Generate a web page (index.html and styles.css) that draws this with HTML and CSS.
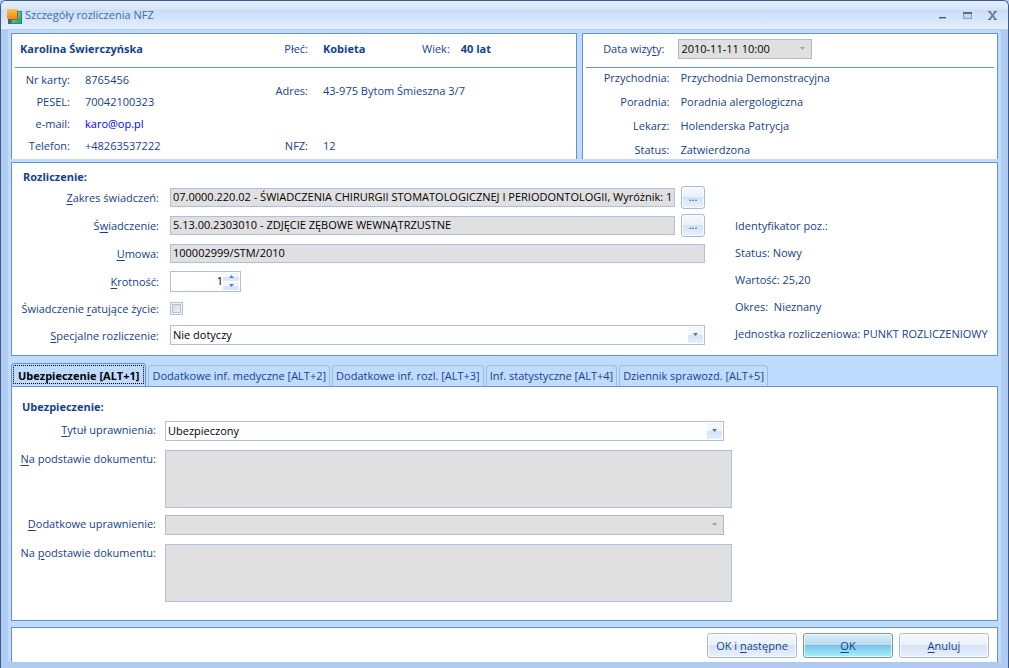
FILE: index.html
```html
<!DOCTYPE html>
<html lang="pl">
<head>
<meta charset="utf-8">
<title>Szczegóły rozliczenia NFZ</title>
<link rel="stylesheet" href="styles.css">
</head>
<body>
<div class="window">
  <header class="titlebar">
    <svg class="app-icon" width="16" height="18" viewBox="0 0 16 18" aria-hidden="true">
      <defs>
        <linearGradient id="og" x1="0" y1="0" x2="0" y2="1"><stop offset="0" stop-color="#ffc14a"/><stop offset="1" stop-color="#ee8a10"/></linearGradient>
        <linearGradient id="gg" x1="0" y1="0" x2="1" y2="1"><stop offset="0" stop-color="#9fd6b4"/><stop offset="1" stop-color="#1d9a68"/></linearGradient>
      </defs>
      <rect x="1" y="13" width="5" height="5" fill="#4a5f8c"/>
      <rect x="4.500" y="5.500" width="10" height="12" fill="url(#gg)" stroke="#2f8a66"/>
      <path d="M2 13.500h8.500v-9" fill="none" stroke="#8b6a35"/>
      <rect x="0" y="3" width="10" height="10" rx="1" fill="url(#og)"/>
    </svg>
    <h1 class="window-title">Szczegóły rozliczenia NFZ</h1>
    <div class="window-buttons">
      <button type="button" class="win-btn" aria-label="Minimalizuj"><svg width="9" height="9" viewBox="0 0 9 9"><path d="M1 6h7v1H1z" fill="#4d5a70"/><path d="M1 7h7v1H1z" fill="#9fb0c8"/></svg></button>
      <button type="button" class="win-btn" aria-label="Maksymalizuj"><svg width="9" height="9" viewBox="0 0 9 9"><rect x="0.500" y="1.500" width="8" height="6" fill="#c3d5ee" stroke="#8ba0c0"/><path d="M0 1h9v2H0z" fill="#5c6b86"/></svg></button>
      <button type="button" class="win-btn" aria-label="Zamknij"><svg width="9" height="9" viewBox="0 0 9 9"><path d="M1.500 .5l6 8M7.500 .5l-6 8" stroke="#76859d" stroke-width="2"/><path d="M0 .5h3M6 .5h3M0 8.500h3M6 8.500h3" stroke="#5f6b80"/></svg></button>
    </div>
  </header>
  <main class="content">
    <div class="info">
      <section class="panel open-bottom">
        <div class="info-head person-grid">
          <strong class="name">Karolina Świerczyńska</strong>
          <span class="label">Płeć:</span>
          <div class="sex-age"><strong class="sex">Kobieta</strong><span>Wiek:</span><strong>40 lat</strong></div>
        </div>
        <div class="person-grid person-body">
          <span class="label">Nr karty:</span><span>8765456</span>
          <span class="label address">Adres:</span><span class="address">43-975 Bytom Śmieszna 3/7</span>
          <span class="label first">PESEL:</span><span>70042100323</span>
          <span class="label first">e-mail:</span><a class="mail" href="mailto:karo@op.pl">karo@op.pl</a>
          <span class="label first">Telefon:</span><span>+48263537222</span>
          <span class="label">NFZ:</span><span>12</span>
        </div>
      </section>
      <section class="panel open-bottom">
        <div class="info-head visit-head">
          <label class="label" for="visit-date">Data wizy<u>t</u>y:</label>
          <span class="combo visit-combo"><select id="visit-date" disabled><option>2010-11-11 10:00</option></select><svg class="arrow" width="5" height="3" viewBox="0 0 5 3"><path d="M0 0h5L2.500 3z"/></svg></span>
        </div>
        <div class="visit-grid">
          <span class="label">Przychodnia:</span><span>Przychodnia Demonstracyjna</span>
          <span class="label">Poradnia:</span><span>Poradnia alergologiczna</span>
          <span class="label">Lekarz:</span><span>Holenderska Patrycja</span>
          <span class="label">Status:</span><span>Zatwierdzona</span>
        </div>
      </section>
    </div>

    <section class="panel billing">
      <h2 class="section-title">Rozliczenie:</h2>
      <div class="billing-body">
        <div class="billing-form">
          <label class="label" for="scope"><u>Z</u>akres świadczeń:</label>
          <div class="picker"><input class="text" id="scope" type="text" readonly value="07.0000.220.02 - ŚWIADCZENIA CHIRURGII STOMATOLOGICZNEJ I PERIODONTOLOGII, Wyróżnik: 1"><button type="button" class="btn dots" aria-label="Wybierz zakres">...</button></div>
          <label class="label" for="service">Ś<u>w</u>iadczenie:</label>
          <div class="picker"><input class="text" id="service" type="text" readonly value="5.13.00.2303010 - ZDJĘCIE ZĘBOWE WEWNĄTRZUSTNE"><button type="button" class="btn dots" aria-label="Wybierz świadczenie">...</button></div>
          <label class="label" for="contract"><u>U</u>mowa:</label>
          <input class="text" id="contract" type="text" readonly value="100002999/STM/2010">
          <label class="label" for="count"><u>K</u>rotność:</label>
          <div class="spin"><input id="count" type="number" value="1"><span class="spin-buttons"><button type="button" aria-label="Więcej"><svg width="5" height="3" viewBox="0 0 5 3"><path d="M0 3h5L2.500 0z"/></svg></button><button type="button" aria-label="Mniej"><svg width="5" height="3" viewBox="0 0 5 3"><path d="M0 0h5L2.500 3z"/></svg></button></span></div>
          <label class="label" for="lifesaving">Świadczenie <u>r</u>atujące życie:</label>
          <input class="check" id="lifesaving" type="checkbox">
          <label class="label" for="special"><u>S</u>pecjalne rozliczenie:</label>
          <span class="combo"><select id="special"><option>Nie dotyczy</option></select><svg class="arrow" width="5" height="3" viewBox="0 0 5 3"><path d="M0 0h5L2.500 3z"/></svg></span>
        </div>
        <div class="billing-side">
          <p>Identyfikator poz.:</p>
          <p>Status: Nowy</p>
          <p>Wartość: 25,20</p>
          <p>Okres:&nbsp; Nieznany</p>
          <p>Jednostka rozliczeniowa: PUNKT ROZLICZENIOWY</p>
        </div>
      </div>
    </section>

    <div class="tabs" role="tablist">
      <button type="button" class="tab active" role="tab" aria-selected="true">Ubezpieczenie [ALT+1]</button>
      <button type="button" class="tab" role="tab">Dodatkowe inf. medyczne [ALT+2]</button>
      <button type="button" class="tab" role="tab">Dodatkowe inf. rozl. [ALT+3]</button>
      <button type="button" class="tab" role="tab">Inf. statystyczne [ALT+4]</button>
      <button type="button" class="tab" role="tab">Dziennik sprawozd. [ALT+5]</button>
    </div>
    <section class="panel insurance" role="tabpanel">
      <h2 class="section-title">Ubezpieczenie:</h2>
      <div class="insurance-form">
        <label class="label" for="title"><u>T</u>ytuł uprawnienia:</label>
        <span class="combo narrow"><select id="title"><option>Ubezpieczony</option></select><svg class="arrow" width="5" height="3" viewBox="0 0 5 3"><path d="M0 0h5L2.500 3z"/></svg></span>
        <label class="label" for="doc1"><u>N</u>a podstawie dokumentu:</label>
        <textarea id="doc1" readonly></textarea>
        <label class="label" for="extra"><u>D</u>odatkowe uprawnienie:</label>
        <span class="combo narrow"><select id="extra" disabled><option></option></select><svg class="arrow" width="5" height="3" viewBox="0 0 5 3"><path d="M0 0h5L2.500 3z"/></svg></span>
        <label class="label" for="doc2">Na <u>p</u>odstawie dokumentu:</label>
        <textarea id="doc2" readonly></textarea>
      </div>
    </section>

    <footer class="panel open-bottom actions">
      <button type="button" class="btn action">OK i <u>n</u>astępne</button>
      <button type="button" class="btn action primary"><u>O</u>K</button>
      <button type="button" class="btn action"><u>A</u>nuluj</button>
    </footer>
  </main>
</div>
</body>
</html>
```
FILE: styles.css
```css
* { box-sizing: border-box; }
body, h1, h2, p { margin: 0; }
body {
  background: #b1caef;
  color: #15428b;
  font: 11px/14px "Open Sans", "Noto Sans", sans-serif;
}
button, input, select, textarea { font: inherit; color: inherit; margin: 0; padding: 0; }
u { text-underline-offset: 2px; }

.window {
  display: flex;
  flex-direction: column;
  min-height: 100vh;
  border: 1px solid #3b5a8a;
  border-bottom: 0;
  border-radius: 6px 6px 0 0;
  overflow: hidden;
}
.titlebar {
  display: flex;
  align-items: center;
  height: 29px;
  padding: 0 7px 0 6px;
  border-bottom: 1px solid #b0cff7;
  background: linear-gradient(#e4eefd 0, #d9e7fa 8px, #cadef7 9px, #e1edfd 27px, #edf5ff 28px);
}
.window-title { margin-left: 2px; font-size: 11px; font-weight: 400; color: #3e6aaa; }
.window-buttons { display: flex; gap: 8px; margin-left: auto; }
.win-btn {
  display: flex;
  align-items: center;
  justify-content: center;
  width: 17px;
  height: 17px;
  border: 0;
  background: none;
}

.content {
  flex: 1;
  display: flex;
  flex-direction: column;
  margin: 0 7px 6px;
  padding: 3px 3px 0;
  background: #bfdbff;
}
.panel { background: #fff; border: 1px solid #6593cf; }
.open-bottom { border-bottom: 0; }
.label { text-align: right; white-space: nowrap; }
strong, .section-title { font-size: 11px; font-weight: 700; }

.info { display: grid; grid-template-columns: 567fr 416fr; gap: 5px; }
.info-head {
  height: 34px;
  margin-left: 3px;
  align-items: center;
  padding-bottom: 4px;
  border-bottom: 1px solid #6593cf;
}
.person-grid { display: grid; grid-template-columns: 58px 170px 38px 1fr; column-gap: 15px; }
.info-head.person-grid { grid-template-columns: 55px 170px 38px 1fr; }
.name { grid-column: 1 / 3; padding-left: 5px; }
.sex-age { display: flex; gap: 11px; }
.sex { width: 88px; }
.person-body { grid-auto-rows: 22px; padding: 1px 0 2px; align-items: center; }
.person-body .first { grid-column: 1; }
.person-body .address { grid-row: 1 / 3; }
.person-body .address.label { grid-column: 3; }
.person-body span.address:not(.label) { grid-column: 4; }
.mail { color: #00f; text-decoration: none; }
.visit-head {
  display: grid;
  grid-template-columns: 78px 134px;
  column-gap: 14px;
  margin-right: 3px;
}
.visit-grid {
  display: grid;
  grid-template-columns: 86px 1fr;
  column-gap: 11px;
  row-gap: 5px;
  line-height: 19px;
}

.combo { position: relative; display: block; height: 20px; }
.combo select {
  appearance: none;
  width: 100%;
  height: 100%;
  padding: 0 20px 0 2px;
  border: 1px solid #abc1de;
  border-radius: 0;
  background: linear-gradient(#f3f7fd 0 50%, #d3e2f6 50%, #e6effc) no-repeat right 1px center / 15px 16px #fff;
  color: #000;
}
.combo select:disabled { background: #e0e0e0; border-color: #b1bbc6; opacity: 1; }
.arrow { position: absolute; right: 7px; top: 8px; fill: #4a76b5; pointer-events: none; }
select:disabled + .arrow { fill: #a3a296; }

.billing { margin-top: 3px; padding: 7px 0; }
.billing .section-title { padding-left: 11px; line-height: 13px; }
.billing-body { display: flex; gap: 30px; }
.billing-form {
  flex: 1;
  display: grid;
  grid-template-columns: 147px 1fr;
  grid-template-rows: repeat(4, 28px) 26px 27px;
  column-gap: 11px;
  align-items: center;
}
.billing-form .label { padding-top: 2px; }
.billing-side { width: 262px; padding-top: 29px; line-height: 27px; white-space: nowrap; }
.text {
  width: 100%;
  min-width: 0;
  height: 19px;
  padding: 0 0 2px 2px;
  border: 1px solid #abc1de;
  background: #e0e0e0;
  color: #000;
}
.picker { display: flex; align-items: center; gap: 6px; }
.btn {
  border: 1px solid #a5bdd3;
  border-radius: 3px;
  background: linear-gradient(#f6f9fd, #eaf1fa 46%, #d3e1f4 46%, #e9f1fd);
  box-shadow: inset 0 0 0 1px #ffffffb0;
}
.dots { flex: none; width: 24px; height: 23px; }
.spin { display: flex; width: 71px; height: 21px; border: 1px solid #abc1de; }
.spin input {
  flex: 1;
  min-width: 0;
  border: 0;
  background: #fff;
  color: #000;
  text-align: right;
  appearance: textfield;
}
.spin input::-webkit-inner-spin-button { appearance: none; }
.spin-buttons { display: flex; flex-direction: column; gap: 1px; width: 17px; padding: 1px 1px 1px 0; }
.spin-buttons button {
  flex: 1;
  display: flex;
  align-items: center;
  justify-content: center;
  border: 0;
  background: linear-gradient(#f3f7fd 50%, #d9e6f8 50%);
}
.spin-buttons svg { fill: #5580bd; }
.check {
  appearance: none;
  width: 13px;
  height: 13px;
  border: 1px solid #abc1de;
  background: linear-gradient(135deg, #cfd3da, #f6f6f6);
  box-shadow: inset 0 0 0 1px #f4f4f4, inset 0 0 0 2px #b9bfca;
}

.tabs { display: flex; align-items: flex-end; gap: 2px; height: 23px; margin-top: 7px; }
.tab {
  height: 21px;
  padding: 0 3px;
  border: 1px solid #9ebdd6;
  border-bottom: 0;
  border-radius: 4px 4px 0 0;
  background: #bfdbff;
  white-space: nowrap;
}
.tab.active {
  height: 23px;
  padding: 2px 6px 0;
  border-color: #6593cf;
  color: #000;
  font-weight: 700;
  outline: 1px dotted #000;
  outline-offset: -3px;
}
.insurance { flex: 1; padding: 13px 0 18px; }
.insurance .section-title { padding-left: 10px; }
.insurance-form {
  display: grid;
  grid-template-columns: 144px 567fr 256fr;
  column-gap: 9px;
  row-gap: 7px;
  padding-top: 7px;
}
.insurance-form .label { grid-column: 1; padding-top: 2px; }
.narrow { margin: 0 8px 2px 0; }
textarea {
  display: block;
  width: 100%;
  height: 58px;
  border: 1px solid #abc1de;
  background: #e0e0e0;
  color: #000;
  resize: none;
}

.actions {
  display: flex;
  justify-content: flex-end;
  gap: 6px;
  margin-top: 6px;
  padding: 5px 8px 4px;
}
.action { width: 90px; height: 25px; }
.primary {
  border-color: #7398b4;
  background: linear-gradient(#dcedf8, #b9dcf0 46%, #79bfe8 46%, #a9f0fb);
}
```
